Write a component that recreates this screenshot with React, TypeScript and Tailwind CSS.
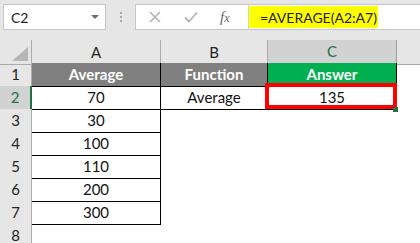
const cellFont = { fontFamily: 'Lato, "Liberation Sans", sans-serif' }

const rows = [
  { n: 1, a: 'Average', b: 'Function', c: 'Answer', head: true },
  { n: 2, a: '70', b: 'Average', c: '135' },
  { n: 3, a: '30' },
  { n: 4, a: '100' },
  { n: 5, a: '110' },
  { n: 6, a: '200' },
  { n: 7, a: '300' },
  { n: 8 },
]

function FormulaBar() {
  return (
    <div className="h-[40px] bg-[#e6e6e6] flex items-start pt-[4px]">
      <div className="ml-[3px] w-[103px] h-[26px] bg-white border border-[#c6c6c6] flex items-center justify-between pl-[7px] pr-[6px]">
        <span className="text-[14px] text-[#222]">C2</span>
        <span className="w-0 h-0 border-l-[4px] border-r-[4px] border-t-[4px] border-l-transparent border-r-transparent border-t-[#6f6f6f]" />
      </div>
      <div className="w-[29px] h-[26px] flex flex-col items-center justify-center gap-[2px]">
        <span className="w-[2px] h-[2px] bg-[#a6a6a6]" />
        <span className="w-[2px] h-[2px] bg-[#a6a6a6]" />
        <span className="w-[2px] h-[2px] bg-[#a6a6a6]" />
      </div>
      <div className="flex-1 h-[26px] bg-white border border-r-0 border-[#c6c6c6] flex">
        <div className="w-[112px] flex items-center">
          <svg width="12" height="12" viewBox="0 0 12 12" className="ml-[13px]">
            <path d="M1 1 L11 11 M11 1 L1 11" stroke="#b4b4b4" strokeWidth="1.6" fill="none" />
          </svg>
          <svg width="14" height="12" viewBox="0 0 14 12" className="ml-[23px]">
            <path d="M1 6.5 L5 10.5 L13 1.5" stroke="#b4b4b4" strokeWidth="1.8" fill="none" />
          </svg>
          <span className="ml-[22px] text-[15px] italic text-[#666]" style={{ fontFamily: '"Liberation Serif", serif' }}>
            f<span className="text-[12px]">x</span>
          </span>
        </div>
        <div className="border-l border-[#d4d4d4] flex items-stretch py-[1px]">
          <div className="w-[129px] bg-[#ffff00] flex items-center pl-[11px] text-[14px] text-[#222]">
            =AVERAGE(A2:A7)
          </div>
        </div>
      </div>
    </div>
  )
}

function HeaderRow() {
  return (
    <div className="grid grid-cols-[32px_129px_107px_129px_1fr] h-[23px] text-[15px]">
      <div className="border-r border-b border-[#ababab] bg-[#e6e6e6] relative">
        <svg width="16" height="14" viewBox="0 0 16 14" className="absolute right-[3px] bottom-[3px]">
          <path d="M16 0 L16 14 L0 14 Z" fill="#b6b6b6" />
        </svg>
      </div>
      <div className="border-r border-b border-[#ababab] bg-[#e6e6e6] flex items-center justify-center text-[#222]">A</div>
      <div className="border-r border-b border-[#ababab] bg-[#e6e6e6] flex items-center justify-center text-[#222]">B</div>
      <div className="border-r border-[#9a9a9a] border-b-2 border-b-[#4a6b55] bg-[#d2d2d2] flex items-center justify-center text-[#217346]">C</div>
      <div className="border-b border-[#ababab] bg-[#e6e6e6]" />
    </div>
  )
}

export default function App() {
  return (
    <div className="w-[420px] h-[243px] overflow-hidden bg-white" style={cellFont}>
      <FormulaBar />
      <HeaderRow />
      {rows.map((r) => {
        const sel = r.n === 2
        return (
          <div key={r.n} className="grid grid-cols-[32px_129px_107px_129px_1fr] h-[23px] text-[15px]">
            <div
              className={
                sel
                  ? 'border-r-2 border-r-[#217346] border-b border-b-[#c8c8c8] bg-[#d2d2d2] text-[#217346] flex items-center justify-center'
                  : 'border-r border-r-[#ababab] border-b border-b-[#c8c8c8] bg-[#e6e6e6] text-[#222] flex items-center justify-center'
              }
            >
              {r.n}
            </div>
            {r.a !== undefined ? (
              <div
                className={
                  r.head
                    ? 'border-r border-b border-black bg-[#808080] text-white font-bold flex items-center justify-center'
                    : 'border-r border-b border-black text-[#111] flex items-center justify-center'
                }
              >
                {r.a}
              </div>
            ) : (
              <div />
            )}
            {r.b !== undefined ? (
              <div
                className={
                  r.head
                    ? 'border-r border-b border-black bg-[#808080] text-white font-bold flex items-center justify-center'
                    : 'border-r border-b border-black text-[#111] flex items-center justify-center'
                }
              >
                {r.b}
              </div>
            ) : (
              <div />
            )}
            {r.c !== undefined ? (
              <div
                className={
                  r.head
                    ? 'border-r border-b border-black bg-[#00b050] text-white font-bold flex items-center justify-center'
                    : 'border-r border-b border-black text-[#111] flex items-center justify-center relative'
                }
              >
                {r.c}
                {sel && (
                  <>
                    <span className="absolute left-[-3px] top-[-3px] w-[132px] h-[26px] border-[4px] border-[#ff0000]" />
                    <span className="absolute right-[-2px] bottom-[-3px] w-[5px] h-[5px] bg-[#217346]" />
                  </>
                )}
              </div>
            ) : (
              <div />
            )}
            <div />
          </div>
        )
      })}
    </div>
  )
}
